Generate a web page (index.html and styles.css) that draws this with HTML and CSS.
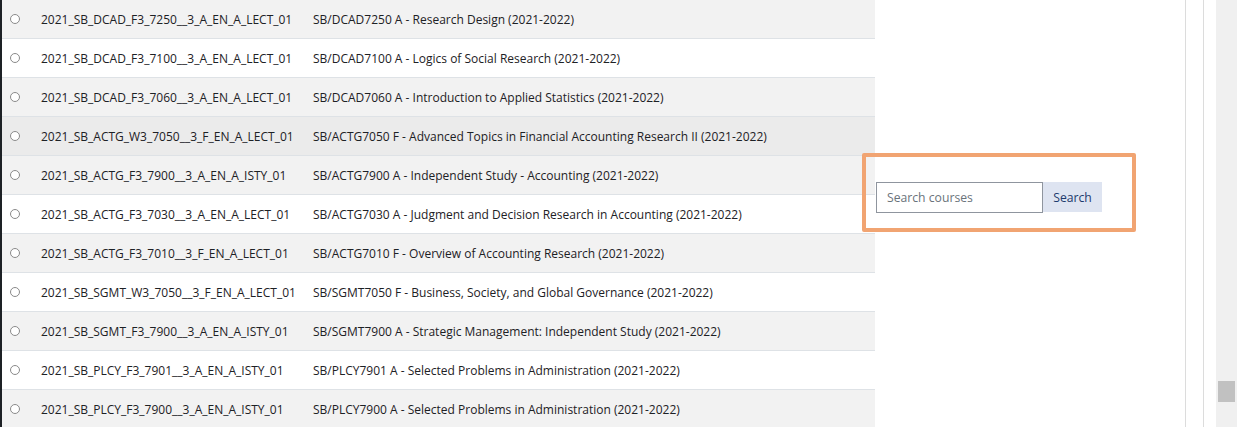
FILE: index.html
```html
<!DOCTYPE html>
<html lang="en">
  <head>
    <meta charset="UTF-8" />
    <title>Course search</title>
    <link rel="stylesheet" href="styles.css">
  </head>
  <body>
    <div class="page">
      <div class="edge"></div>
      <table class="courses">
        <tr class="striped">
          <td class="pick"><span class="radio"></span></td>
          <td class="code">2021_SB_DCAD_F3_7250__3_A_EN_A_LECT_01</td>
          <td class="name">SB/DCAD7250 A - Research Design (2021-2022)</td>
        </tr>
        <tr>
          <td class="pick"><span class="radio"></span></td>
          <td class="code">2021_SB_DCAD_F3_7100__3_A_EN_A_LECT_01</td>
          <td class="name">SB/DCAD7100 A - Logics of Social Research (2021-2022)</td>
        </tr>
        <tr class="striped">
          <td class="pick"><span class="radio"></span></td>
          <td class="code">2021_SB_DCAD_F3_7060__3_A_EN_A_LECT_01</td>
          <td class="name">SB/DCAD7060 A - Introduction to Applied Statistics (2021-2022)</td>
        </tr>
        <tr class="hover">
          <td class="pick"><span class="radio"></span></td>
          <td class="code">2021_SB_ACTG_W3_7050__3_F_EN_A_LECT_01</td>
          <td class="name">SB/ACTG7050 F - Advanced Topics in Financial Accounting Research II (2021-2022)</td>
        </tr>
        <tr class="striped">
          <td class="pick"><span class="radio"></span></td>
          <td class="code">2021_SB_ACTG_F3_7900__3_A_EN_A_ISTY_01</td>
          <td class="name">SB/ACTG7900 A - Independent Study - Accounting (2021-2022)</td>
        </tr>
        <tr>
          <td class="pick"><span class="radio"></span></td>
          <td class="code">2021_SB_ACTG_F3_7030__3_A_EN_A_LECT_01</td>
          <td class="name">SB/ACTG7030 A - Judgment and Decision Research in Accounting (2021-2022)</td>
        </tr>
        <tr class="striped">
          <td class="pick"><span class="radio"></span></td>
          <td class="code">2021_SB_ACTG_F3_7010__3_F_EN_A_LECT_01</td>
          <td class="name">SB/ACTG7010 F - Overview of Accounting Research (2021-2022)</td>
        </tr>
        <tr>
          <td class="pick"><span class="radio"></span></td>
          <td class="code">2021_SB_SGMT_W3_7050__3_F_EN_A_LECT_01</td>
          <td class="name">SB/SGMT7050 F - Business, Society, and Global Governance (2021-2022)</td>
        </tr>
        <tr class="striped">
          <td class="pick"><span class="radio"></span></td>
          <td class="code">2021_SB_SGMT_F3_7900__3_A_EN_A_ISTY_01</td>
          <td class="name">SB/SGMT7900 A - Strategic Management: Independent Study (2021-2022)</td>
        </tr>
        <tr>
          <td class="pick"><span class="radio"></span></td>
          <td class="code">2021_SB_PLCY_F3_7901__3_A_EN_A_ISTY_01</td>
          <td class="name">SB/PLCY7901 A - Selected Problems in Administration (2021-2022)</td>
        </tr>
        <tr class="striped">
          <td class="pick"><span class="radio"></span></td>
          <td class="code">2021_SB_PLCY_F3_7900__3_A_EN_A_ISTY_01</td>
          <td class="name">SB/PLCY7900 A - Selected Problems in Administration (2021-2022)</td>
        </tr>
      </table>
      <div class="side">
        <form class="search">
          <input type="text" placeholder="Search courses" />
          <button type="button">Search</button>
        </form>
        <div class="highlight"></div>
      </div>
      <div class="rule"></div>
      <div class="gutter"></div>
      <div class="rule"></div>
      <div class="spacer"></div>
      <div class="scrollbar">
        <div class="thumb"></div>
      </div>
    </div>
  </body>
</html>
```

FILE: styles.css
```css
html,
body {
  margin: 0;
  padding: 0;
  height: 100%;
  overflow: hidden;
  background: #fff;
}
body {
  font-family: "Open Sans", "Noto Sans", sans-serif;
  font-size: 12px;
  color: #1d2125;
}
.page {
  display: flex;
  height: 427px;
}
.edge {
  width: 2px;
  background-color: #1d2125;
  flex: none;
}
.courses {
  width: 873px;
  flex: none;
  border-collapse: collapse;
  align-self: flex-start;
  margin-top: -1px;
}
.courses td {
  height: 38px;
  padding: 0;
  border-top: 1px solid #dee2e6;
  white-space: nowrap;
  vertical-align: middle;
}
.courses tr.striped {
  background-color: #f2f2f2;
}
.courses tr.hover {
  background-color: #ebebeb;
}
.courses td.pick {
  width: 31px;
  padding-left: 8px;
}
.code {
  width: 272px;
}
.radio {
  display: block;
  width: 8px;
  height: 8px;
  margin-top: -1px;
  border: 1px solid #8a8a8a;
  border-radius: 50%;
  background: #fff;
}
.side {
  flex: none;
  width: 310px;
  position: relative;
}
.search {
  display: flex;
  margin: 182px 0 0 1px;
}
.search input {
  width: 167px;
  height: 31px;
  box-sizing: border-box;
  border: 1px solid #8f959e;
  padding: 0 10px;
  font-family: inherit;
  font-size: 12.2px;
  color: #1d2125;
  outline: none;
}
.search input::placeholder {
  color: #6a737b;
}
.search button {
  width: 59px;
  height: 30px;
  border: none;
  background-color: #dee4f1;
  color: #1d3a6c;
  font-family: inherit;
  font-size: 12.2px;
  padding: 0;
  cursor: pointer;
}
.highlight {
  position: absolute;
  left: -13px;
  top: 153px;
  width: 274px;
  height: 79px;
  box-sizing: border-box;
  border: 4px solid #f1a472;
  border-radius: 2px;
}
.rule {
  width: 1px;
  flex: none;
  background-color: #dcdcdc;
}
.gutter {
  width: 17px;
  flex: none;
}
.spacer {
  width: 12px;
  flex: none;
}
.scrollbar {
  width: 21px;
  flex: none;
  background-color: #f0f0f0;
  display: flex;
  flex-direction: column;
}
.thumb {
  margin: 381px 2px 0;
  height: 21px;
  background-color: #c1c1c1;
}
```
